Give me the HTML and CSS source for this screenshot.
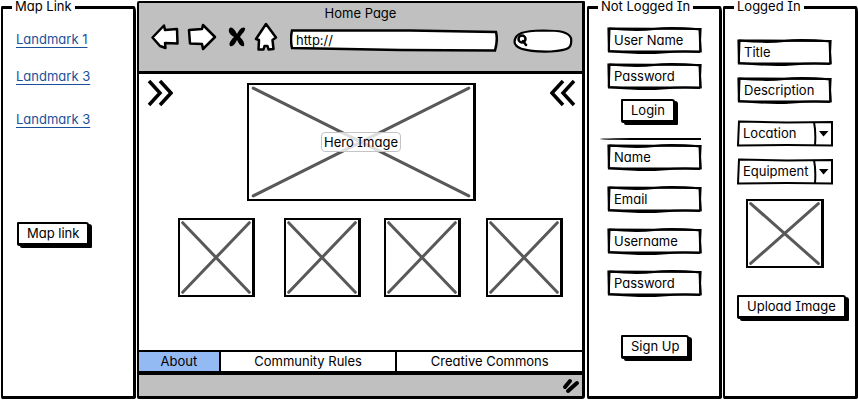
FILE: index.html
```html
<!DOCTYPE html>
<html lang="en">
<head>
<meta charset="utf-8">
<meta name="viewport" content="width=device-width, initial-scale=1">
<title>Home Page</title>
<link rel="stylesheet" href="styles.css">
</head>
<body>
<svg class="defs" aria-hidden="true">
  <symbol id="cross" class="cross" viewBox="0 0 100 100" preserveAspectRatio="none">
    <path class="cross-line" d="M1 1 99 99M99 1 1 99"/>
  </symbol>
</svg>
<div class="wireframe">
  <fieldset class="panel links">
    <legend>Map Link</legend>
    <ul class="link-list">
      <li><a href="#landmark-1">Landmark 1</a></li>
      <li><a href="#landmark-2">Landmark 3</a></li>
      <li class="spaced"><a href="#landmark-3">Landmark 3</a></li>
    </ul>
    <button class="button map-button" type="button">Map link</button>
  </fieldset>

  <main class="browser">
    <header class="chrome">
      <h1>Home Page</h1>
      <div class="toolbar">
        <button class="tool back" type="button" aria-label="Back">
          <svg width="28" height="26" viewBox="0 0 28 26"><path class="outline" d="M1.5 13.5 13 1.5 14 6 26 5 26.5 19.5 14 19 14.5 24 9 22Z"/></svg>
        </button>
        <button class="tool forward" type="button" aria-label="Forward">
          <svg width="30" height="28" viewBox="0 0 30 28"><path class="outline" d="M2 7 15 6 16 2 28 14 16 26 15 21 3 20.5Z"/></svg>
        </button>
        <button class="tool stop" type="button" aria-label="Stop">
          <svg width="18" height="22" viewBox="0 0 18 22"><path class="solid" d="M1 3C3 0 6 2 9 8 11 4 14 0 17 2 18 4 14 8 12 11 15 14 17 17 16 20 13 21 11 18 9 14 7 18 5 21 2 20 0 17 4 13 6 11 3 9 0 7 1 3Z"/></svg>
        </button>
        <button class="tool home" type="button" aria-label="Home">
          <svg width="24" height="30" viewBox="0 0 24 30"><path class="outline" d="M12 2 22 15.500 18.500 18 19.500 27 14.500 27.500 13.500 24 10.500 24 9.500 27.500 4.500 27.500 5 18 2 17Z"/></svg>
        </button>
        <input class="url" type="text" value="http://" aria-label="Address">
        <label class="search">
          <svg width="12" height="13" viewBox="0 0 12 13" aria-hidden="true"><circle class="lens" cx="5" cy="5" r="3.500"/><path class="lens" d="M6 7 9 11"/></svg>
          <input type="search" aria-label="Search">
        </label>
      </div>
    </header>
    <section class="content">
      <div class="carousel">
        <button class="tool" type="button" aria-label="Next">
          <svg width="26" height="28" viewBox="0 0 26 28"><path class="chevron" d="M2 2 13 14 2 26M13 2 24 14 13 26"/></svg>
        </button>
        <figure class="hero picture">
          <svg role="img" aria-label="Hero Image"><use href="#cross"/></svg>
          <figcaption>Hero Image</figcaption>
        </figure>
        <button class="tool" type="button" aria-label="Previous">
          <svg width="26" height="28" viewBox="0 0 26 28"><path class="chevron" d="M13 2 2 14 13 26M24 2 13 14 24 26"/></svg>
        </button>
      </div>
      <div class="thumbs">
        <div class="picture thumb"><svg aria-hidden="true"><use href="#cross"/></svg></div>
        <div class="picture thumb"><svg aria-hidden="true"><use href="#cross"/></svg></div>
        <div class="picture thumb"><svg aria-hidden="true"><use href="#cross"/></svg></div>
        <div class="picture thumb"><svg aria-hidden="true"><use href="#cross"/></svg></div>
      </div>
    </section>
    <nav class="tabs">
      <a class="active" href="#about">About</a>
      <a href="#rules">Community Rules</a>
      <a href="#commons">Creative Commons</a>
    </nav>
    <footer class="status">
      <svg width="18" height="16" viewBox="0 0 18 16" aria-hidden="true"><path class="grip" d="M3 9 8 3M6 13 15 5"/></svg>
    </footer>
  </main>

  <fieldset class="panel account">
    <legend>Not Logged In</legend>
    <form class="form login">
      <input class="field" type="text" placeholder="User Name" aria-label="User Name">
      <input class="field" type="text" placeholder="Password" aria-label="Password">
      <button class="button" type="button">Login</button>
    </form>
    <hr>
    <form class="form signup">
      <input class="field" type="text" placeholder="Name" aria-label="Name">
      <input class="field" type="text" placeholder="Email" aria-label="Email">
      <input class="field" type="text" placeholder="Username" aria-label="Username">
      <input class="field" type="text" placeholder="Password" aria-label="New password">
      <button class="button" type="button">Sign Up</button>
    </form>
  </fieldset>

  <fieldset class="panel member">
    <legend>Logged In</legend>
    <form class="form upload">
      <input class="field" type="text" placeholder="Title" aria-label="Title">
      <input class="field" type="text" placeholder="Description" aria-label="Description">
      <select class="drop" aria-label="Location"><option>Location</option></select>
      <select class="drop" aria-label="Equipment"><option>Equipment</option></select>
      <div class="picture preview"><svg aria-hidden="true"><use href="#cross"/></svg></div>
      <button class="button" type="button">Upload Image</button>
    </form>
  </fieldset>
</div>
</body>
</html>
```

FILE: styles.css
```css
* {
  box-sizing: border-box;
}

body {
  margin: 0;
  background: #fff;
  color: #000;
  font: 13px/16px Inter, "Liberation Sans", sans-serif;
  font-feature-settings: "cv11", "cv08";
}

button,
input,
select {
  margin: 0;
  font: inherit;
  font-feature-settings: inherit;
  color: inherit;
}

.defs {
  position: absolute;
  width: 0;
  height: 0;
}

.wireframe {
  display: grid;
  grid-template-columns: minmax(0, 136fr) minmax(0, 450fr) minmax(0, 136fr) minmax(0, 136fr);
  min-height: 100vh;
}

/* Side panels */
.panel {
  min-width: 0;
  margin: 0 0 1px 1px;
  padding: 0;
  border: 3px solid #000;
  border-left-width: 2px;
  border-radius: 1px 2px 3px 1px / 2px 6px 2px 3px;
}

.panel legend {
  margin-left: 9px;
  padding: 0 3px 3px;
  line-height: 12px;
}

.link-list {
  margin: 16px 0 0 13px;
  padding: 0;
  list-style: none;
}

.link-list li {
  margin-bottom: 21px;
}

.link-list .spaced {
  margin-top: 27px;
}

.link-list a {
  color: #1a5099;
  text-decoration: underline;
  text-underline-offset: 3px;
  text-decoration-skip-ink: none;
}

.map-button {
  margin: 74px 0 0 14px;
}

.button {
  padding: 2px 8px 3px;
  border: 2px solid #000;
  border-bottom-width: 3px;
  border-radius: 1px 3px 1px 2px;
  background: #fff;
  box-shadow: 3px 2px 0 #000;
  line-height: 14px;
  white-space: nowrap;
}

/* Browser window */
.browser {
  display: flex;
  flex-direction: column;
  margin: 1px;
  border: 3px solid #000;
  border-top-width: 2px;
  border-left-width: 2px;
  border-radius: 2px 1px 3px 2px;
}

.chrome {
  height: 71px;
  border-bottom: 3px solid #000;
  background: #c0c0c0;
}

h1 {
  margin: 2px 0 0;
  font-size: 13px;
  font-weight: 400;
  line-height: 16px;
  text-align: center;
}

.toolbar {
  display: flex;
  align-items: center;
  height: 32px;
  padding: 0 9px 0 12px;
}

.tool {
  display: flex;
  padding: 0;
  border: 0;
  background: none;
}

.forward {
  margin-left: 8px;
}

.stop {
  margin-left: 11px;
}

.home {
  margin-left: 8px;
}

.outline {
  fill: #fff;
  stroke: #000;
  stroke-width: 2.500;
  stroke-linejoin: round;
}

.url,
.search {
  margin-top: 7px;
}

.url {
  flex: 1;
  min-width: 0;
  height: 23px;
  margin-left: 12px;
  padding: 0 6px 2px;
  border: 0;
  background: url("data:image/svg+xml,%3Csvg xmlns='http://www.w3.org/2000/svg' viewBox='0 0 208 23' preserveAspectRatio='none'%3E%3Cpath d='M2 1.500 120 1.500 206 3Q208 11 205 21.500L110 21 2 19Q0 10 2 1.500Z' fill='white' stroke='black' stroke-width='2.500'/%3E%3C/svg%3E") 0 0 / 100% 100% no-repeat;
}

.search {
  display: flex;
  align-items: center;
  width: 60px;
  height: 24px;
  margin-left: 15px;
  padding-left: 4px;
  background: url("data:image/svg+xml,%3Csvg xmlns='http://www.w3.org/2000/svg' viewBox='0 0 60 24' preserveAspectRatio='none'%3E%3Cpath d='M1.500 13C2 4 10 2 30 1.500 48 1.500 55 3 58 9 59.500 20 55 21 38 22.500 20 23 2 21 1.500 13Z' fill='white' stroke='black' stroke-width='2.200'/%3E%3C/svg%3E") 0 0 / 100% 100% no-repeat;
}

.search input {
  width: 36px;
  padding: 0;
  border: 0;
  background: none;
}

.lens {
  fill: none;
  stroke: #000;
  stroke-width: 2.500;
  stroke-linecap: round;
}

.content {
  flex: 1;
}

.carousel {
  display: flex;
  justify-content: space-between;
  align-items: flex-start;
  padding: 5px 6px 0 8px;
}

.chevron {
  fill: none;
  stroke: #000;
  stroke-width: 3.500;
}

.picture {
  border: 2px solid #000;
  border-right-width: 3px;
}

.picture svg {
  display: block;
  width: 100%;
  height: 100%;
  padding: 2px;
}

.picture svg,
.cross {
  overflow: visible;
}

.cross-line {
  fill: none;
  stroke: #595959;
  stroke-width: 3;
  stroke-linecap: round;
  vector-effect: non-scaling-stroke;
}

.hero {
  position: relative;
  flex: 1;
  min-width: 0;
  height: 118px;
  margin: 4px 74px 0;
}

.hero figcaption {
  position: absolute;
  top: 50%;
  left: 50%;
  padding: 1px 2px;
  border: 1px solid #c4c4c4;
  border-radius: 4px;
  background: rgb(255 255 255 / 80%);
  white-space: nowrap;
  transform: translate(-50%, -50%);
}

.thumbs {
  display: grid;
  grid-template-columns: 106fr 100fr 102fr 77fr;
  margin: 17px 19px 0 39px;
}

.thumb {
  width: 77px;
  height: 79px;
}

.tabs {
  display: grid;
  grid-template-columns: 80fr 177fr 187fr;
  border-top: 2px solid #000;
  border-bottom: 4px solid #000;
}

.tabs a {
  border-left: 2px solid #000;
  color: inherit;
  line-height: 19px;
  text-align: center;
  text-decoration: none;
}

.tabs .active {
  border-left: 0;
  background: #94baf3;
}

.status {
  display: flex;
  justify-content: flex-end;
  align-items: center;
  height: 21px;
  padding-right: 2px;
  background: #c0c0c0;
}

.grip {
  fill: none;
  stroke: #000;
  stroke-width: 4;
  stroke-linecap: round;
}

/* Forms */
.form {
  display: flex;
  flex-direction: column;
  align-items: flex-start;
}

.field {
  width: 95px;
  height: 27px;
  padding: 0 7px 2px;
  border: 0;
  background: url("data:image/svg+xml,%3Csvg xmlns='http://www.w3.org/2000/svg' viewBox='0 0 95 27' preserveAspectRatio='none'%3E%3Cpath d='M1.500 1.500 93.500 2 93 13 93.500 24.500 2 24.500Z' fill='white' stroke='black' stroke-width='2.200'/%3E%3Cpath d='M2 1.500Q30 4 47 2T93 2.500M2 24Q35 27 55 25.500T93 25M2.500 2 1.800 24M92.500 2 93.500 25' fill='none' stroke='black' stroke-width='2'/%3E%3C/svg%3E") 0 0 / 100% 100% no-repeat;
}

.field::placeholder {
  color: #000;
  opacity: 1;
}

.login {
  gap: 9px;
  margin: 12px 0 0 18px;
}

.login .button,
.signup .button {
  margin-left: 14px;
}

hr {
  height: 2px;
  margin: 15px 18px 4px 11px;
  border: 0;
  border-radius: 50% 0 0 50%;
  background: #000;
}

.signup {
  gap: 15px;
  margin-left: 18px;
}

.signup .button {
  margin-top: 23px;
}

.upload {
  gap: 11px;
  margin: 24px 0 0 12px;
}

.drop {
  width: 96px;
  height: 27px;
  margin-top: 5px;
  padding: 0 20px 2px 6px;
  border: 0;
  appearance: none;
  background: url("data:image/svg+xml,%3Csvg xmlns='http://www.w3.org/2000/svg' viewBox='0 0 96 27' preserveAspectRatio='none'%3E%3Cpath d='M2 1.500 50 2.500 95 2 95 25.500 50 25 1 25.500Z M77 2Q79 12 78 25' fill='white' stroke='black' stroke-width='2'/%3E%3Cpath d='M82 11H91.500L86.500 16.500Z'/%3E%3C/svg%3E") 0 0 / 100% 100% no-repeat;
}

.drop + .drop {
  margin-top: 0;
}

.preview {
  width: 78px;
  height: 69px;
  margin: 3px 0 16px 9px;
}

.preview .cross-line {
  stroke-width: 4;
}
```
